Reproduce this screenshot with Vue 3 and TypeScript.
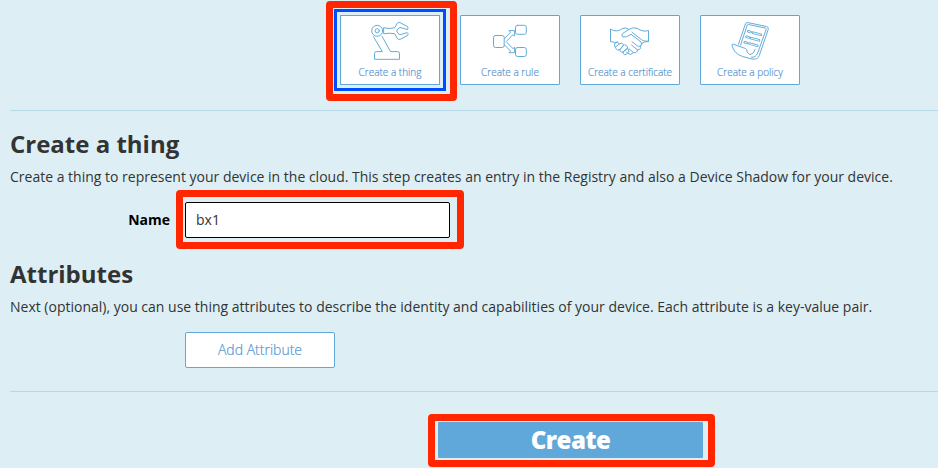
<script setup lang="ts">
import { ref } from 'vue'

type IconName = 'thing' | 'rule' | 'certificate' | 'policy'

interface Resource {
  icon: IconName
  label: string
}

const resources: Resource[] = [
  { icon: 'thing', label: 'Create a thing' },
  { icon: 'rule', label: 'Create a rule' },
  { icon: 'certificate', label: 'Create a certificate' },
  { icon: 'policy', label: 'Create a policy' },
]

const selected = ref<IconName>('thing')
const name = ref('bx1')
</script>

<template>
  <main class="page">
    <nav class="cards">
      <button
        v-for="item in resources"
        :key="item.icon"
        type="button"
        class="card"
        :class="{ selected: selected === item.icon }"
        @click="selected = item.icon"
      >
        <svg v-if="item.icon === 'thing'" class="icon" viewBox="0 0 98 48">
          <circle cx="36.2" cy="14.8" r="5.5" />
          <circle cx="36.2" cy="14.8" r="2.1" />
          <path d="M43 11.8Q48 13.3 53.7 11.8L56.2 7.2Q57.3 5.9 59 6.6L66.5 10.5Q67.6 12 66.5 13.6L59 11.4Q56.5 12.5 55.7 15Q56.5 17.5 59 18.8L66.2 16.6Q67.8 17.6 66.8 19.3L59.5 23.2Q57.6 24 56.4 22.5L53.7 17.7Q48 16.7 43 17.7Z" />
          <path d="M32.5 20.8L41.3 35.6H35.5Q33.5 35.6 33.5 37.3V43.3H58.5V37.3Q58.5 35.6 56.5 35.6H49.5L41 20.2" />
        </svg>
        <svg v-else-if="item.icon === 'rule'" class="icon" viewBox="0 0 98 48">
          <rect x="32.5" y="19.5" width="10.7" height="12" rx="2" />
          <rect x="54.5" y="9.3" width="10.8" height="9" rx="2" />
          <rect x="54.5" y="31.5" width="10.8" height="9" rx="2" />
          <path d="M43.4 22.6L49.6 16.2L48 14.6H53.6V20.2L52 18.6L45.2 25.6L52 32.7L53.6 31.1V36.7H48L49.6 35.1L43.4 28.8" />
        </svg>
        <svg v-else-if="item.icon === 'certificate'" class="icon" viewBox="0 0 98 48">
          <path d="M29.5 13.3Q36 17 41.5 12.5Q45 11 48 13.5Q51 11 56 12.2Q62 16.5 67.5 14.5V25.5Q63 25 60 28" />
          <path d="M29.5 13.3V25.7Q32 25.5 34 27L36.5 25.8M48 13.5L41.5 17.5Q40.3 19 41.5 20.7Q45 22.2 50 18.3L60 26Q62 28.3 59.5 30Q58 31 56.3 29.8L51 25.7" />
          <path d="M59.5 30Q60.5 33.7 56.5 34L50.5 29M56.5 34Q56 37.5 52.5 36.6L48 32.8M52.5 36.6Q50 39.8 47 37.5L45.5 36" />
          <path d="M51 16.3L61.5 24.4Q63.5 25.5 67.5 25.2" />
          <path d="M34 31Q32.3 28.5 34.5 27Q36.7 25.3 38.5 27.8Q41 25.9 42.6 28.7Q41 31.4 38.8 33.7Q36.5 35 34.8 32.6ZM38.8 33.7Q39 36.7 42 36L46.5 32.5Q47 29.5 43.7 28.8M42 36Q42 39.4 45 38.5L47.8 36Q48.2 33.7 46.5 32.5M34.5 31L38.5 27.8M38.5 34L42.5 29.5M42 36L46 32.5" />
        </svg>
        <svg v-else class="icon" viewBox="0 0 98 48">
          <path d="M37.5 28.2L44.4 8Q45 6.2 47 6.6L65.5 10.5Q68 11.1 67.2 13.5L58.3 39.5Q56.5 44 51 43L41.5 40.5Q32.7 37.5 31 29Q31 27.7 32.3 28.2L44.5 32.5Q46.5 33.2 46 36Q48 39.8 51.2 37.9Q53 36.5 54 33.5" />
          <path d="M39.5 29.2L46.2 9.2Q46.6 8.3 47.8 8.6L64.3 12Q65.5 12.3 65.1 13.5L56.7 37Q54.5 42 50.5 41.2" />
          <path d="M47.2 15.3l2.4.7M45.5 20.8l2.4.7M43.7 26.3l2.4.7" class="band" />
          <path d="M52 16.7l7.8 2.1M50.2 22.2l7.8 2.1M48.5 27.6l7.8 2.1" class="band" />
          <path d="M47.4 15.4l2 .6M45.7 20.9l2 .6M43.9 26.4l2 .6M52.2 16.8l7.4 2M50.4 22.3l7.4 2M48.7 27.7l7.4 2" class="band-core" />
        </svg>
        <span class="card-label">{{ item.label }}</span>
      </button>
      <span class="callout callout-card"></span>
    </nav>

    <section class="details">
      <h2>Create a thing</h2>
      <p class="lead">Create a thing to represent your device in the cloud. This step creates an entry in the Registry and also a Device Shadow for your device.</p>
      <div class="row">
        <label for="thing-name">Name</label>
        <div class="field">
          <input id="thing-name" v-model="name" type="text" />
          <span class="callout callout-field"></span>
        </div>
      </div>
      <h2>Attributes</h2>
      <p class="next">Next (optional), you can use thing attributes to describe the identity and capabilities of your device. Each attribute is a key-value pair.</p>
      <button type="button" class="add">Add Attribute</button>
    </section>

    <footer class="actions">
      <div class="submit">
        <button type="button" class="create">Create</button>
        <span class="callout callout-create"></span>
      </div>
    </footer>
  </main>
</template>

<style>
body {
  background: #ddeff5;
  overflow: hidden;
}
</style>

<style scoped>
.page {
  box-sizing: border-box;
  height: 468px;
  padding: 15px 0 0 10px;
  overflow: hidden;
  background: #ddeff5;
  color: #333;
  font: 14px/20px "Open Sans", "Noto Sans", sans-serif;
}

.page * {
  box-sizing: border-box;
}

button,
input {
  margin: 0;
  font-family: inherit;
}

.cards {
  position: relative;
  display: flex;
  gap: 20px;
  height: 96px;
  padding-left: 330px;
  border-bottom: 1px solid #b5d9e8;
}

.card {
  display: flex;
  flex-direction: column;
  align-items: center;
  width: 100px;
  height: 70px;
  padding: 0;
  border: 1px solid #5fa8d9;
  border-radius: 1px;
  background: #fff;
  color: #5795d0;
}

.card.selected {
  border-radius: 0;
  outline: 3px solid #004cff;
  outline-offset: 3px;
}

.icon {
  flex: none;
  width: 98px;
  height: 48px;
  fill: none;
  stroke: #65acd8;
  stroke-width: 1;
  stroke-linejoin: round;
  stroke-linecap: round;
}

.icon .band {
  stroke-width: 2.6;
}

.icon .band-core {
  stroke: #fff;
  stroke-width: 0.9;
}

.card-label {
  font-size: 10px;
  font-weight: 300;
  line-height: 16px;
  white-space: nowrap;
  -webkit-text-stroke: 0.2px currentColor;
}

.callout {
  position: absolute;
  border: 7px solid #ff2600;
  border-radius: 4px;
  pointer-events: none;
}

.callout-card {
  left: 316px;
  top: -14px;
  width: 131px;
  height: 100px;
}

.details {
  display: flex;
  flex-direction: column;
  height: 281px;
  padding-top: 17px;
  border-bottom: 1px solid #b5d9e8;
}

h2 {
  margin: 0;
  color: #333;
  font-size: 24px;
  font-weight: 700;
  line-height: 32px;
}

p {
  margin: 7px 0 0;
  white-space: nowrap;
}

.row {
  display: flex;
  align-items: center;
  gap: 15px;
  height: 36px;
  margin: 15px 0 20px;
}

.row label {
  width: 160px;
  color: #000;
  font-weight: 700;
  text-align: right;
}

.field {
  position: relative;
  display: flex;
}

.field input {
  width: 265px;
  height: 36px;
  padding: 0 10px 2px;
  border: 1px solid #000;
  border-radius: 2px;
  outline: none;
  background: #fff;
  color: #333;
  font-size: 14px;
}

.callout-field {
  left: -9.5px;
  top: -12px;
  width: 288px;
  height: 59px;
}

.add {
  width: 150px;
  height: 36px;
  margin: 15px 0 0 175px;
  padding: 0 0 2px;
  border: 1px solid #5fa8d9;
  border-radius: 2px;
  background: #fff;
  color: #5795d0;
  font-size: 14px;
  font-weight: 300;
  -webkit-text-stroke: 0.2px currentColor;
}

.actions {
  display: flex;
  padding: 30px 0 0 428px;
}

.submit {
  position: relative;
  display: flex;
}

.create {
  width: 265px;
  height: 36px;
  padding: 0;
  border: 0;
  border-radius: 1px;
  background: #5fa8d9;
  color: #fff;
  font-size: 24px;
  font-weight: 800;
  letter-spacing: -0.5px;
  line-height: 36px;
}

.callout-create {
  left: -10px;
  top: -8px;
  width: 287px;
  height: 53px;
}
</style>
